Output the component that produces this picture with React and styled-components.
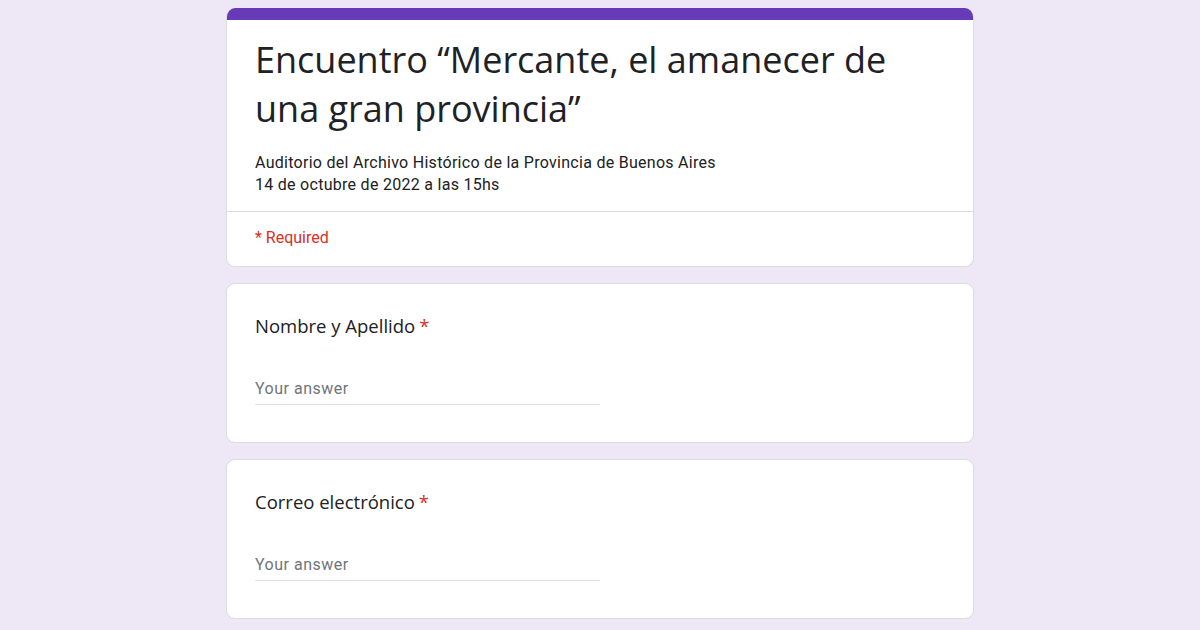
import React from 'react';
import styled, { createGlobalStyle } from 'styled-components';

const GlobalStyle = createGlobalStyle`
  body {
    margin: 0;
    background: #ede7f6;
    font-family: Roboto, "Liberation Sans", sans-serif;
  }
`;

const Page = styled.main`
  width: 748px;
  margin: 0 auto;
  padding-top: 8px;
  display: flex;
  flex-direction: column;
  gap: 16px;
`;

const Card = styled.section`
  background: #fff;
  border: 1px solid #dadce0;
  border-radius: 9px;
  overflow: hidden;
`;

const HeaderCard = styled(Card)`
  border-top: 0;
`;

const AccentBar = styled.div`
  height: 12px;
  background: #673ab7;
`;

const HeaderMain = styled.div`
  padding: 15px 28px 15px;
  border-bottom: 1px solid #dadce0;
`;

const Title = styled.h1`
  margin: 0 0 19px;
  font-family: "Open Sans", Roboto, sans-serif;
  font-weight: 400;
  font-size: 36px;
  line-height: 49px;
  color: #202124;
`;

const Description = styled.p`
  margin: 0;
  font-size: 16px;
  line-height: 22px;
  letter-spacing: 0.28px;
  color: #202124;
`;

const RequiredNote = styled.div`
  padding: 15px 28px 17px;
  font-size: 16px;
  line-height: 22px;
  color: #d93025;
`;

const QuestionCard = styled(Card)`
  padding: 28px 28px 37px;
`;

const Label = styled.div`
  font-family: "Open Sans", Roboto, sans-serif;
  font-size: 18.5px;
  line-height: 28px;
  color: #202124;
  margin-bottom: 38px;
`;

const Star = styled.span`
  color: #d93025;
  margin-left: 4px;
`;

const AnswerInput = styled.input`
  display: block;
  width: 50%;
  box-sizing: border-box;
  border: 0;
  border-bottom: 1px solid #e0e0e0;
  outline: none;
  padding: 0 0 4px;
  font-family: Roboto, "Liberation Sans", sans-serif;
  font-size: 16px;
  line-height: 22px;
  letter-spacing: 0.5px;
  color: #202124;
  background: transparent;

  &::placeholder {
    color: #70757a;
  }
`;

function Question({ label }) {
  return (
    <QuestionCard>
      <Label>
        {label}
        <Star>*</Star>
      </Label>
      <AnswerInput placeholder='Your answer' />
    </QuestionCard>
  );
}

export default function App() {
  return (
    <>
      <GlobalStyle />
      <Page>
        <HeaderCard>
          <AccentBar />
          <HeaderMain>
            <Title>Encuentro “Mercante, el amanecer de una gran provincia”</Title>
            <Description>
              Auditorio del Archivo Histórico de la Provincia de Buenos Aires
              <br />
              14 de octubre de 2022 a las 15hs
            </Description>
          </HeaderMain>
          <RequiredNote>* Required</RequiredNote>
        </HeaderCard>
        <Question label='Nombre y Apellido' />
        <Question label='Correo electrónico' />
      </Page>
    </>
  );
}
